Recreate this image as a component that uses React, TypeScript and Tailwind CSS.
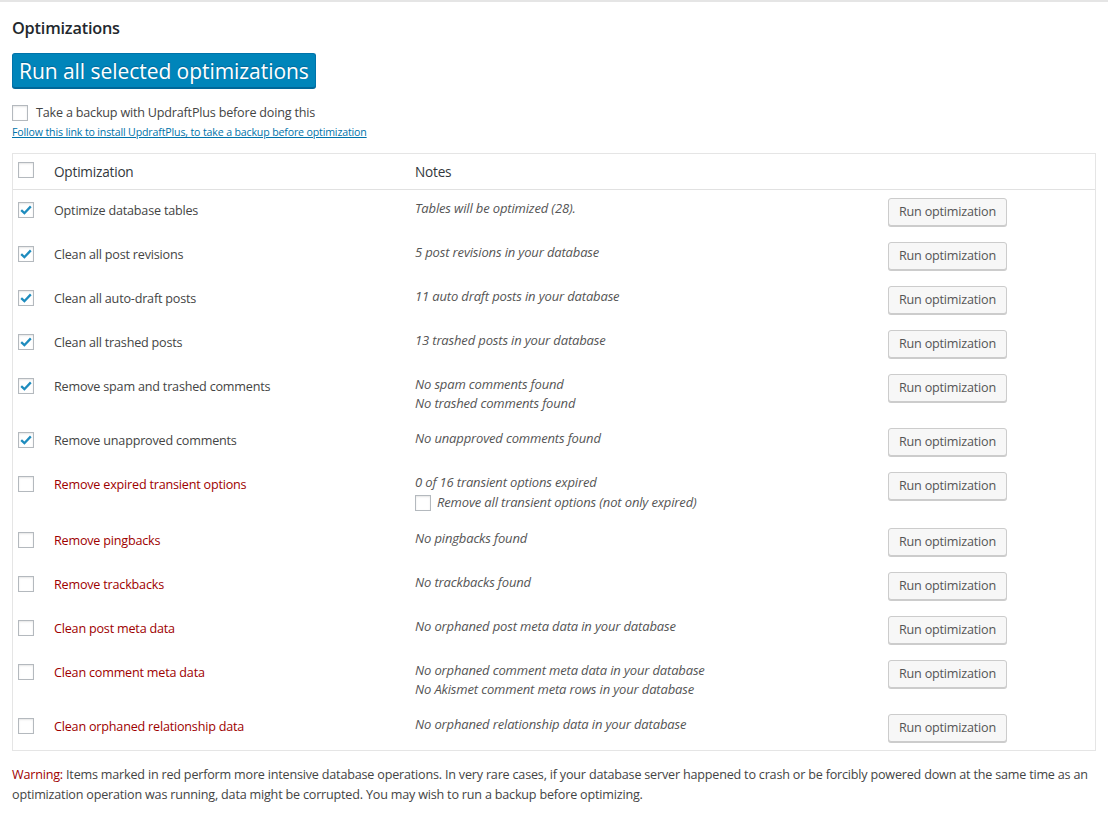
import React from "react";

type Row = {
  label: string;
  red?: boolean;
  checked?: boolean;
  notes: string[];
  extra?: string;
};

const rows: Row[] = [
  { label: "Optimize database tables", checked: true, notes: ["Tables will be optimized (28)."] },
  { label: "Clean all post revisions", checked: true, notes: ["5 post revisions in your database"] },
  { label: "Clean all auto-draft posts", checked: true, notes: ["11 auto draft posts in your database"] },
  { label: "Clean all trashed posts", checked: true, notes: ["13 trashed posts in your database"] },
  { label: "Remove spam and trashed comments", checked: true, notes: ["No spam comments found", "No trashed comments found"] },
  { label: "Remove unapproved comments", checked: true, notes: ["No unapproved comments found"] },
  { label: "Remove expired transient options", red: true, notes: ["0 of 16 transient options expired"], extra: "Remove all transient options (not only expired)" },
  { label: "Remove pingbacks", red: true, notes: ["No pingbacks found"] },
  { label: "Remove trackbacks", red: true, notes: ["No trackbacks found"] },
  { label: "Clean post meta data", red: true, notes: ["No orphaned post meta data in your database"] },
  { label: "Clean comment meta data", red: true, notes: ["No orphaned comment meta data in your database", "No Akismet comment meta rows in your database"] },
  { label: "Clean orphaned relationship data", red: true, notes: ["No orphaned relationship data in your database"] },
];

function Checkbox({ checked }: { checked?: boolean }) {
  return (
    <span className="flex h-[16px] w-[16px] shrink-0 items-center justify-center border border-[#b4b9be] bg-white shadow-[inset_0_1px_2px_rgba(0,0,0,0.1)]">
      {checked && (
        <svg width="14" height="14" viewBox="0 0 14 14">
          <path d="M2.2 7.2 L5.4 10.2 L11.8 3.4" fill="none" stroke="#1e8cbe" strokeWidth="2.3" strokeLinecap="butt" strokeLinejoin="miter" />
        </svg>
      )}
    </span>
  );
}

export default function App() {
  return (
    <div className="min-h-[825px] w-[1108px] border-t-2 border-[#e5e5e5] bg-white font-['Open_Sans',sans-serif] text-[12.6px] tracking-[-0.2px] text-[#444]">
      <div className="px-[12px] pt-[15px]">
        <h3 className="text-[16.3px] font-semibold leading-[22px] tracking-[-0.2px] text-[#23282d]">Optimizations</h3>
        <button className="mt-[14px] h-[35px] rounded-[3px] border border-[#0073aa] border-b-[#006799] bg-[#0085ba] px-[6px] pt-[2px] text-[21px] leading-[31px] tracking-[-0.05px] text-white shadow-[0_1px_0_#006799] [text-shadow:0_-1px_1px_#006799]">
          Run all selected optimizations
        </button>
        <div className="mt-[17px] flex items-center">
          <Checkbox />
          <span className="ml-[8px] leading-[16px]">Take a backup with UpdraftPlus before doing this</span>
        </div>
        <div className="mt-[4px] text-[10.6px] leading-[15px] tracking-[-0.15px]">
          <a className="text-[#0073aa] underline">Follow this link to install UpdraftPlus, to take a backup before optimization</a>
        </div>

        <div className="mt-[13px] border border-[#e5e5e5]">
          <div className="grid grid-cols-[31px_361px_473px_1fr] border-b border-[#e1e1e1]">
            <div className="pl-[5px] pt-[8px]">
              <Checkbox />
            </div>
            <div className="pl-[10px] pt-[8px] pb-[8px] text-[13.6px] leading-[19px] text-[#32373c]">Optimization</div>
            <div className="pl-[10px] pt-[8px] text-[13.6px] leading-[19px] text-[#32373c]">Notes</div>
            <div />
          </div>
          {rows.map((r, i) => (
            <div key={i} className="grid grid-cols-[31px_361px_473px_1fr] items-start">
              <div className="pl-[5px] pt-[12px]">
                <Checkbox checked={r.checked} />
              </div>
              <div className={`pl-[10px] pt-[11px] leading-[19px] ${r.red ? "text-[#9e0000]" : "text-[#444]"}`}>{r.label}</div>
              <div className="pl-[10px] pt-[9px] pb-[7px] text-[13px] italic leading-[19px] tracking-[-0.15px] text-[#555]">
                {r.notes.map((n, j) => (
                  <div key={j}>{n}</div>
                ))}
                {r.extra && (
                  <div className="flex h-[21px] items-center">
                    <Checkbox />
                    <span className="ml-[6px]">{r.extra}</span>
                  </div>
                )}
              </div>
              <div className="pl-[10px] py-[8px]">
                <button className="h-[28px] rounded-[3px] border border-[#ccc] bg-[#f7f7f7] px-[10px] leading-[26px] text-[#555] shadow-[0_1px_0_#ccc]">
                  Run optimization
                </button>
              </div>
            </div>
          ))}
        </div>

        <div className="mt-[14px] leading-[20px] text-[#444]">
          <div className="whitespace-nowrap">
            <span className="text-[#9e0000]">Warning:</span> Items marked in red perform more intensive database operations. In very rare cases, if your database server happened to crash or be forcibly powered down at the same time as an
          </div>
          <div className="whitespace-nowrap">
            optimization operation was running, data might be corrupted. You may wish to run a backup before optimizing.
          </div>
        </div>
      </div>
    </div>
  );
}
